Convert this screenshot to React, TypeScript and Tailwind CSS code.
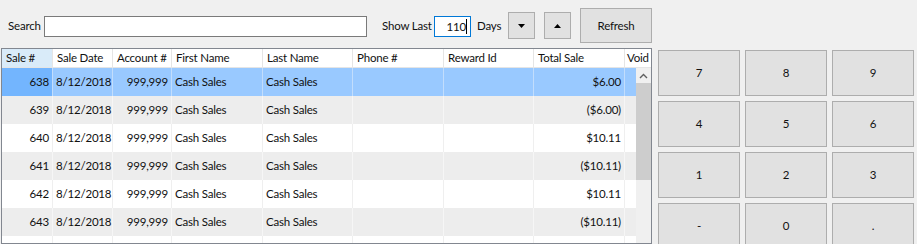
import React from "react";

const cols = [
  { name: "Sale #", w: 51, right: true },
  { name: "Sale Date", w: 60 },
  { name: "Account #", w: 59, right: true },
  { name: "First Name", w: 91 },
  { name: "Last Name", w: 90 },
  { name: "Phone #", w: 91 },
  { name: "Reward Id", w: 90 },
  { name: "Total Sale", w: 91, right: true },
];

const rows = [
  ["638", "8/12/2018", "999,999", "Cash Sales", "Cash Sales", "", "", "$6.00"],
  ["639", "8/12/2018", "999,999", "Cash Sales", "Cash Sales", "", "", "($6.00)"],
  ["640", "8/12/2018", "999,999", "Cash Sales", "Cash Sales", "", "", "$10.11"],
  ["641", "8/12/2018", "999,999", "Cash Sales", "Cash Sales", "", "", "($10.11)"],
  ["642", "8/12/2018", "999,999", "Cash Sales", "Cash Sales", "", "", "$10.11"],
  ["643", "8/12/2018", "999,999", "Cash Sales", "Cash Sales", "", "", "($10.11)"],
  ["", "", "", "", "", "", "", ""],
];

const keys = ["7", "8", "9", "4", "5", "6", "1", "2", "3", "-", "0", "."];

function Tri({ up }: { up?: boolean }) {
  return (
    <svg width="7" height="4" viewBox="0 0 7 4">
      {up ? <path d="M0 4 L3.5 0 L7 4 Z" fill="#000" /> : <path d="M0 0 L3.5 4 L7 0 Z" fill="#000" />}
    </svg>
  );
}

export default function App() {
  return (
    <div
      className="w-[917px] h-[244px] overflow-hidden bg-[#f0f0f0] text-[11.5px] tracking-[-0.2px] text-[#111]"
      style={{ fontFamily: 'Lato, "Noto Sans", sans-serif' }}
    >
      {/* top bar */}
      <div className="flex items-start h-[48px]">
        <span className="ml-[8px] mt-[17px] w-[36px] shrink-0 leading-[18px] whitespace-nowrap">Search</span>
        <div className="mt-[16px] w-[323px] h-[21px] bg-white border border-[#7a7a7a]" />
        <span className="ml-[15px] mt-[17px] w-[52px] shrink-0 leading-[18px] whitespace-nowrap">Show Last</span>
        <div className="mt-[16px] w-[37px] h-[21px] bg-white border border-[#0078d7] flex items-center justify-end pr-[3px] leading-[18px]">
          <span>110</span>
          <span className="w-[1px] h-[15px] bg-black" />
        </div>
        <span className="ml-[6px] mt-[17px] w-[31px] shrink-0 leading-[18px]">Days</span>
        <button className="mt-[12px] w-[27px] h-[27px] bg-[#e1e1e1] border border-[#adadad] flex items-center justify-center">
          <Tri />
        </button>
        <button className="ml-[9px] mt-[12px] w-[27px] h-[27px] bg-[#e1e1e1] border border-[#adadad] flex items-center justify-center">
          <Tri up />
        </button>
        <button className="ml-[9px] mt-[8px] w-[72px] h-[35px] bg-[#e1e1e1] border border-[#adadad] flex items-center justify-center">
          Refresh
        </button>
      </div>

      <div className="flex items-start">
        {/* grid */}
        <div className="ml-[1px] w-[651px] h-[196px] border border-[#828790] bg-[#f0f0f0] overflow-hidden">
          <div className="flex h-[19px] bg-white border-b border-[#e5e5e5]">
            {cols.map((c, i) => (
              <div
                key={c.name}
                style={{ width: c.w }}
                className={`shrink-0 h-full border-r border-[#e5e5e5] pl-[4px] leading-[18px] whitespace-nowrap ${
                  i === 0 ? "bg-[#d9ebf9]" : ""
                }`}
              >
                {c.name}
              </div>
            ))}
            <div className="flex-1 pl-[2px] leading-[18px]">Void</div>
          </div>
          <div className="flex">
            <div className="w-[634px] shrink-0">
              {rows.map((r, ri) => {
                const sel = ri === 0;
                const bg = sel ? "bg-[#99c9ff]" : ri % 2 === 1 ? "bg-[#ededed]" : "bg-white";
                const line = sel ? "border-[#c2ddfc]" : ri % 2 === 1 ? "border-[#f6f6f6]" : "border-[#efefef]";
                return (
                  <div key={ri} className={`flex h-[28px] ${bg}`}>
                    {cols.map((c, ci) => (
                      <div
                        key={ci}
                        style={{ width: c.w }}
                        className={`shrink-0 h-full border-r ${line} flex items-center whitespace-nowrap ${
                          c.right ? "justify-end pr-[3px]" : "pl-[3px]"
                        } ${sel && ci === 0 ? "bg-[#73b5fe]" : ""}`}
                      >
                        {r[ci]}
                      </div>
                    ))}
                    <div className="flex-1" />
                  </div>
                );
              })}
            </div>
            <div className="w-[15px] shrink-0 h-[176px] bg-[#f0f0f0] flex flex-col">
              <div className="h-[15px] flex items-center justify-center">
                <svg width="9" height="6" viewBox="0 0 9 6">
                  <path d="M1 5 L4.5 1.5 L8 5" stroke="#606060" strokeWidth="1.4" fill="none" />
                </svg>
              </div>
              <div className="h-[97px] bg-[#cdcdcd]" />
            </div>
          </div>
        </div>

        {/* keypad */}
        <div className="ml-[6px] mt-[2px] grid grid-cols-[82px_82px_82px] gap-x-[5px] gap-y-[5px]">
          {keys.map((k) => (
            <button
              key={k}
              className="h-[46px] bg-[#e1e1e1] border border-[#adadad] flex items-center justify-center"
            >
              {k}
            </button>
          ))}
        </div>
      </div>
    </div>
  );
}
